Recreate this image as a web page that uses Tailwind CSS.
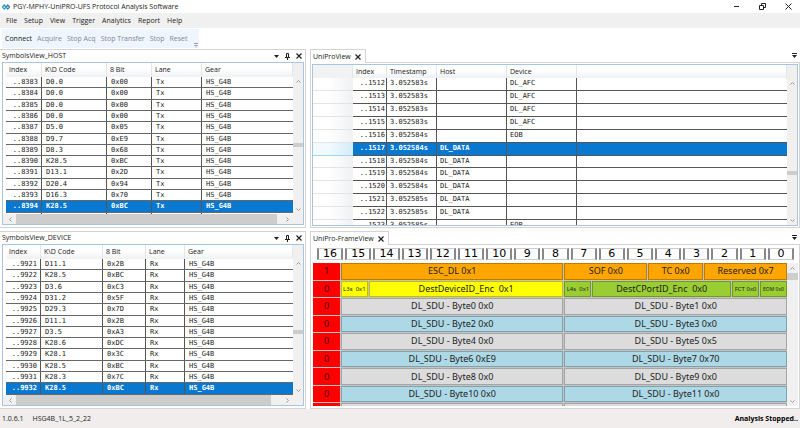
<!DOCTYPE html>
<html lang="en">

<head>
  <meta charset="UTF-8">
  <meta name="viewport" content="width=device-width, initial-scale=1.0">
  <title>PGY-MPHY-UniPRO-UFS Protocol Analysis Software</title>
  <script src="https://cdn.jsdelivr.net/npm/@tailwindcss/browser@4"></script>
</head>

<body class="min-h-screen flex flex-col bg-white font-['Open_Sans','Noto_Sans',sans-serif] text-[7px] leading-[10px] text-[#222] overflow-x-hidden">

  <!-- Title Bar -->
  <header class="flex items-center h-[13px] pl-[2px] pr-2">
    <svg class="w-2 h-2 mr-[3px]" viewBox="0 0 16 16" fill="none" stroke-width="2.5">
      <path d="M8 8 4.500 4 1 8l3.500 4L8 8" stroke="#2b9fb0" />
      <path d="m8 8 3.500-4L15 8l-3.500 4L8 8" stroke="#2f7fc1" />
    </svg>
    <h1>PGY-MPHY-UniPRO-UFS Protocol Analysis Software</h1>
    <div class="ml-auto flex items-center gap-[19px]">
      <button aria-label="Minimize"><svg class="w-[7px] h-[7px]" viewBox="0 0 7 7" stroke="#222"><path d="M1 3.500h5" /></svg></button>
      <button aria-label="Restore"><svg class="w-[7px] h-[7px]" viewBox="0 0 7 7" fill="none" stroke="#222"><path d="M.5 2.500h4v4h-4zM2.500 2.500v-2h4v4h-2" /></svg></button>
      <button aria-label="Close"><svg class="w-[7px] h-[7px]" viewBox="0 0 7 7" stroke="#222"><path d="m.5.5 6 6m0-6-6 6" /></svg></button>
    </div>
  </header>

  <!-- Menu -->
  <nav class="flex items-center gap-[7px] h-[15px] px-[6px] bg-[#f0f0f0]">
    <button>File</button>
    <button>Setup</button>
    <button>View</button>
    <button>Trigger</button>
    <button>Analytics</button>
    <button>Report</button>
    <button>Help</button>
  </nav>

  <!-- Toolbar -->
  <div class="flex h-[21px] pt-px pb-px pl-[2px]">
    <div class="flex items-center gap-[5px] pl-[3px] pr-px bg-[#eef5fd] text-[#838990]">
      <button class="text-[#222]">Connect</button>
      <button>Acquire</button>
      <button>Stop Acq</button>
      <button>Stop Transfer</button>
      <button>Stop</button>
      <button>Reset</button>
      <svg class="self-end w-[4px] h-[5px] ml-px" viewBox="0 0 4 5" stroke="#999"><path d="M0 .5h4M.5 2.500h3M1.500 4h1" /></svg>
    </div>
  </div>

  <main class="grid grid-cols-[153fr_245fr] gap-x-1 gap-y-[3px]">

    <!-- Host Symbols -->
    <section class="h-[179px] pl-[2px] pr-px pb-[2px] flex flex-col border-t border-r border-b border-[#d4d4d4]">
      <div class="flex items-center h-[12px]">
        <h2>SymbolsView_HOST</h2>
        <div class="ml-auto flex items-center gap-[6px] pr-[2px]" data-tools></div>
      </div>
      <div class="flex-1 min-h-0 flex flex-col border border-[#a9c4dd]">
        <div class="flex-1 min-h-0 flex">
          <table class="flex-1 flex flex-col overflow-hidden pl-[3px]" id="host"></table>
          <div class="w-[10px] bg-[#f0f0f0] flex flex-col items-center pt-[16px] pb-[2px]" data-vscroll="59"></div>
        </div>
        <div class="h-[10px] flex items-center bg-[#f0f0f0] px-[5px]" data-hscroll="98"></div>
      </div>
    </section>

    <!-- UniPro View -->
    <section class="h-[179px] flex flex-col">
      <div class="flex items-stretch h-[14px]">
        <div class="flex items-center gap-[4px] pl-[2px] pr-[4px] border border-b-0 border-[#d4d4d4]">
          <h2>UniProView</h2>
          <button aria-label="Close tab"><svg class="w-[6px] h-[6px]" viewBox="0 0 6 6" stroke="#222" stroke-width="1.200"><path d="m.5.5 5 5m0-5-5 5" /></svg></button>
        </div>
        <div class="flex-1 flex items-center justify-end pr-[3px] border-b border-[#d4d4d4]">
          <button aria-label="Tab list"><svg class="w-[5px] h-[5px]" viewBox="0 0 5 5" fill="#222"><path d="M0 0h5v1H0zM0 2h5L2.500 5z" /></svg></button>
        </div>
      </div>
      <div class="flex-1 min-h-0 px-px pt-px pb-px border-x border-b border-[#d4d4d4] flex">
        <div class="flex-1 min-h-0 flex border border-[#a9c4dd]">
          <table class="flex-1 flex flex-col overflow-hidden" id="unipro"></table>
          <div class="w-[10px] bg-[#f0f0f0] flex flex-col items-center pt-[16px] pb-[2px]" data-vscroll="85"></div>
        </div>
      </div>
    </section>

    <!-- Device Symbols -->
    <section class="h-[178px] pl-[2px] pr-px pb-[2px] flex flex-col border-t border-r border-b border-[#d4d4d4]">
      <div class="flex items-center h-[12px]">
        <h2>SymbolsView_DEVICE</h2>
        <div class="ml-auto flex items-center gap-[6px] pr-[2px]" data-tools></div>
      </div>
      <div class="flex-1 min-h-0 flex flex-col border border-[#a9c4dd]">
        <div class="flex-1 min-h-0 flex">
          <table class="flex-1 flex flex-col overflow-hidden pl-[3px]" id="device"></table>
          <div class="w-[10px] bg-[#f0f0f0] flex flex-col items-center pt-[16px] pb-[2px]" data-vscroll="64"></div>
        </div>
        <div class="h-[10px] flex items-center bg-[#f0f0f0] px-[5px]" data-hscroll="96"></div>
      </div>
    </section>

    <!-- Frame View -->
    <section class="h-[178px] flex flex-col">
      <div class="flex items-stretch h-[14px]">
        <div class="flex items-center gap-[4px] pl-[2px] pr-[4px] border border-b-0 border-[#d4d4d4]">
          <h2>UniPro-FrameView</h2>
          <button aria-label="Close tab"><svg class="w-[6px] h-[6px]" viewBox="0 0 6 6" stroke="#222" stroke-width="1.200"><path d="m.5.5 5 5m0-5-5 5" /></svg></button>
        </div>
        <div class="flex-1 flex items-center justify-end pr-[3px] border-b border-[#d4d4d4]">
          <button aria-label="Tab list"><svg class="w-[5px] h-[5px]" viewBox="0 0 5 5" fill="#222"><path d="M0 0h5v1H0zM0 2h5L2.500 5z" /></svg></button>
        </div>
      </div>
      <div class="flex-1 min-h-0 flex flex-col pl-[2px] pr-px pb-[2px] pt-[3px] border-x border-b border-[#d4d4d4]">
        <div class="grid grid-cols-17 gap-x-[2px] h-[12px] mb-[3px] pl-[4px] pr-[4px]" id="bits"></div>
        <div class="flex-1 min-h-0 flex">
          <table class="flex-1 block overflow-hidden bg-[#c4c4c4] font-['Noto_Sans',sans-serif] text-[9px]">
            <tbody class="grid auto-rows-fr h-[158px]" id="frame"></tbody>
          </table>
          <div class="w-[11px] bg-[#f0f0f0] flex flex-col items-center pt-[3px] pb-[2px]" data-vscroll="2"></div>
        </div>
      </div>
    </section>
  </main>

  <!-- Status Bar -->
  <footer class="flex items-center h-[19px] px-[2px] bg-[#f0edec]">
    <span>1.0.6.1</span>
    <span class="ml-[9px]">HSG4B_1L_5_2_22</span>
    <strong class="ml-auto text-black">Analysis Stopped..</strong>
  </footer>

  <script>
    const chevron = (d) => `<svg class="w-[5px] h-[5px] shrink-0" viewBox="0 0 5 5" fill="none" stroke="#999"><path d="${d}" /></svg>`;

    document.querySelectorAll('[data-tools]').forEach((el) => {
      el.innerHTML = `
        <button aria-label="Options"><svg class="w-[5px] h-[5px]" viewBox="0 0 5 5" fill="#222"><path d="M0 1h5L2.500 4z" /></svg></button>
        <button aria-label="Pin"><svg class="w-[5px] h-[7px]" viewBox="0 0 5 7" fill="none" stroke="#222"><path d="M1.500 4V.5h2V4M0 4.500h5M2.500 5v2" /></svg></button>
        <button aria-label="Close"><svg class="w-[6px] h-[6px]" viewBox="0 0 6 6" stroke="#222" stroke-width="1.200"><path d="m.5.5 5 5m0-5-5 5" /></svg></button>`;
    });

    // Scrollbars, data-vscroll is the thumb offset in pixels, data-hscroll its width in percent
    document.querySelectorAll('[data-vscroll]').forEach((el) => {
      const top = Number(el.dataset.vscroll);
      el.innerHTML = `
        ${chevron('m.5 3.500 2-2 2 2')}
        <div class="w-full shrink-0 bg-[#cdcdcd] ${top > 2 ? 'h-[4px]' : 'h-[7px]'}" style="margin-top:${top}px"></div>
        <div class="mt-auto leading-none">${chevron('m.5 1.500 2 2 2-2')}</div>`;
    });
    document.querySelectorAll('[data-hscroll]').forEach((el) => {
      el.innerHTML = `
        ${chevron('m3.500.5-2 2 2 2')}
        <div class="flex-1 h-full mx-[3px]"><div class="h-full bg-[#cdcdcd]" style="width:${el.dataset.hscroll}%"></div></div>
        <div class="mr-[8px]">${chevron('m1.500.5 2 2-2 2')}</div>`;
    });

    function symbolTable(id, cols, rows, lane) {
      const head = ['Index', 'K\\D Code', '8 Bit', 'Lane', 'Gear'];
      // last row is only a sliver above the scrollbar, so it has no text
      const body = [...rows.map((r) => [...r, lane, 'HS_G4B']), ['', '', '', '', '']];
      document.getElementById(id).innerHTML = `
        <thead class="block"><tr class="grid ${cols} h-[14px] items-center bg-linear-to-b from-white from-40% to-[#eff1f3]">
          ${head.map((h) => `<th class="pl-[3px] h-[14px] leading-[14px] text-left font-normal border-r border-[#e4e7ea]">${h}</th>`).join('')}
        </tr></thead>
        <tbody class="grid auto-rows-fr h-[147px] shrink-0 font-['DejaVu_Sans_Mono',monospace]">
          ${body.map((r, i) => `<tr class="grid ${cols} border-b border-[#666] ${i === 11 ? 'bg-[#0878d0] text-white font-bold' : ''}">
            ${r.map((c, j) => `<td class="${j === 0 ? 'text-right pr-[3px]' : 'pl-[4px]'} ${j < 4 ? 'border-r border-[#555]' : ''}">${c}</td>`).join('')}
          </tr>`).join('')}
        </tbody>`;
    }

    symbolTable('host', 'grid-cols-[36px_65px_45px_50px_1fr]', [
      ['..8383', 'D0.0', '0x00'], ['..8384', 'D0.0', '0x00'], ['..8385', 'D0.0', '0x00'],
      ['..8386', 'D0.0', '0x00'], ['..8387', 'D5.0', '0x05'], ['..8388', 'D9.7', '0xE9'],
      ['..8389', 'D8.3', '0x68'], ['..8390', 'K28.5', '0xBC'], ['..8391', 'D13.1', '0x2D'],
      ['..8392', 'D20.4', '0x94'], ['..8393', 'D16.3', '0x70'], ['..8394', 'K28.5', '0xBC'],
    ], 'Tx');

    symbolTable('device', 'grid-cols-[35px_62px_43px_39px_1fr]', [
      ['..9921', 'D11.1', '0x2B'], ['..9922', 'K28.5', '0xBC'], ['..9923', 'D3.6', '0xC3'],
      ['..9924', 'D31.2', '0x5F'], ['..9925', 'D29.3', '0x7D'], ['..9926', 'D11.1', '0x2B'],
      ['..9927', 'D3.5', '0xA3'], ['..9928', 'K28.6', '0xDC'], ['..9929', 'K28.1', '0x3C'],
      ['..9930', 'K28.5', '0xBC'], ['..9931', 'K28.3', '0x7C'], ['..9932', 'K28.5', '0xBC'],
    ], 'Rx');

    const events = [
      ['..1512', '3.052583s', '', 'DL_AFC'], ['..1513', '3.052583s', '', 'DL_AFC'],
      ['..1514', '3.052583s', '', 'DL_AFC'], ['..1515', '3.052583s', '', 'DL_AFC'],
      ['..1516', '3.052584s', '', 'EOB'], ['..1517', '3.052584s', 'DL_DATA', ''],
      ['..1518', '3.052584s', 'DL_DATA', ''], ['..1519', '3.052584s', 'DL_DATA', ''],
      ['..1520', '3.052584s', 'DL_DATA', ''], ['..1521', '3.052585s', 'DL_DATA', ''],
      ['..1522', '3.052585s', 'DL_DATA', ''], ['..1523', '3.052585s', '', 'EOB'],
    ];
    document.getElementById('unipro').innerHTML = `
      <thead class="block"><tr class="grid grid-cols-[40px_34px_50px_70px_70px_1fr] h-[13px] bg-linear-to-b from-white from-40% to-[#eff1f3]">
        ${['', 'Index', 'Timestamp', 'Host', 'Device', ''].map((h, i) => `<th class="pl-[3px] leading-[14px] text-left font-normal border-r border-[#e4e7ea] ${i ? '' : 'bg-[#f1f2f4]'}">${h}</th>`).join('')}
      </tr></thead>
      <tbody class="grid auto-rows-fr h-[155px] shrink-0 font-['DejaVu_Sans_Mono',monospace] leading-[11px]">
        ${events.map((r, i) => `<tr class="grid grid-cols-[40px_34px_50px_70px_70px_1fr] ${i === 5 ? 'text-white font-bold' : ''}">
          <td class="border-b bg-linear-to-r from-40% ${i === 5 ? 'border-[#a5d8f0] from-[#f0faff] to-[#d3ecf7]' : 'border-[#e2e4e6] from-white to-[#eff1f3]'}"></td>
          ${[...r, ''].map((c, j) => `<td class="border-b border-[#555] ${i === 5 ? 'bg-[#0878d0]' : ''} ${j === 0 ? 'text-right pr-px' : 'pl-[3px]'} ${j < 4 ? 'border-r' : ''}">${c}</td>`).join('')}
        </tr>`).join('')}
      </tbody>`;

    // Bit numbers, 16 down to 0
    const bits = document.getElementById('bits');
    for (let i = 16; i >= 0; i--) {
      bits.innerHTML += `<div class="border border-x-2 border-y-[#ccc] border-x-[#888] text-center text-black font-['DejaVu_Sans',sans-serif] text-[11px] leading-[10px]">${i}</div>`;
    }

    // Frame fields: text, span class, colour class
    const frame = [
      ['1', [['ESC_DL 0x1', 'col-span-8', 'bg-[#ffa500]'], ['SOF 0x0', 'col-span-3', 'bg-[#ffa500]'], ['TC 0x0', 'col-span-2', 'bg-[#ffa500]'], ['Reserved 0x7', 'col-span-3', 'bg-[#ffa500]']]],
      ['0', [['L3s&nbsp; 0x1', 'col-span-1 text-[6px]', 'bg-[#ffff00]'], ['DestDeviceID_Enc&nbsp; 0x1', 'col-span-7', 'bg-[#ffff00]'], ['L4s&nbsp; 0x1', 'col-span-1 text-[6px]', 'bg-[#9acd32]'], ['DestCPortID_Enc&nbsp; 0x0', 'col-span-5', 'bg-[#9acd32]'], ['FCT 0x0', 'col-span-1 text-[6px]', 'bg-[#9acd32]'], ['EOM 0x0', 'col-span-1 text-[5px]', 'bg-[#9acd32]']]],
    ];
    const values = ['0x0', '0x0', '0x0', '0x0', '0x0', '0x5', '0xE9', '0x70', '0x0', '0x0', '0x0', '0x0'];
    for (let b = 0; b < values.length; b += 2) {
      const color = b % 4 ? 'bg-[#add8e6]' : 'bg-[#dcdcdc]';
      frame.push(['0', [b, b + 1].map((n) => [`DL_SDU - Byte${n} ${values[n]}`, 'col-span-8', color])]);
    }
    // next row starts below the fold
    frame.push(['', [['', 'col-span-8', 'bg-[#dcdcdc]'], ['', 'col-span-8', 'bg-[#dcdcdc]']]]);

    document.getElementById('frame').innerHTML = frame.map(([bit, cells]) => `
      <tr class="grid grid-cols-17 gap-x-px pb-px">
        <td class="bg-[#ff0000] flex items-center justify-center text-[#400]">${bit}</td>
        ${cells.map(([text, span, color]) => `<td class="${span} ${color} min-w-0 flex items-center justify-center border border-black/25 whitespace-nowrap">${text}</td>`).join('')}
      </tr>`).join('');
  </script>
</body>
</html>
